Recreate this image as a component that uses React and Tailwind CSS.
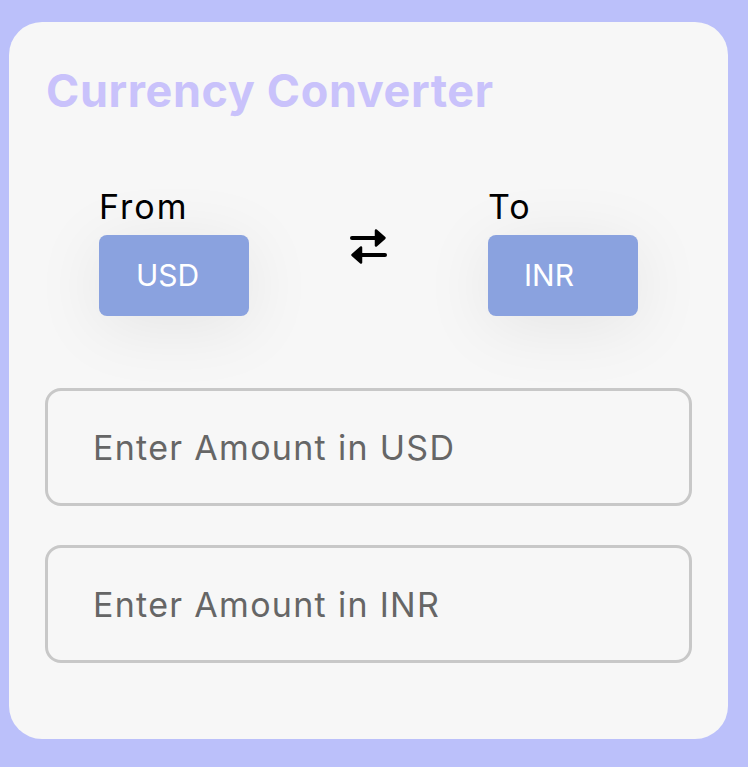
import React from "react";

function SwapIcon() {
  return (
    <svg width="37" height="38" viewBox="0 0 37 38" fill="none" className="block">
      <line x1="2" y1="10" x2="27" y2="10" stroke="#000" strokeWidth="4" strokeLinecap="round" />
      <polygon points="26,2.5 34.5,10 26,17.5" fill="#000" stroke="#000" strokeWidth="2.5" strokeLinejoin="round" />
      <line x1="10" y1="27" x2="35" y2="27" stroke="#000" strokeWidth="4" strokeLinecap="round" />
      <polygon points="11,19.5 2.5,27 11,34.5" fill="#000" stroke="#000" strokeWidth="2.5" strokeLinejoin="round" />
    </svg>
  );
}

export default function App() {
  return (
    <div className="min-h-[767px] w-[748px] bg-[#bbc0fa] pt-[22px] pl-[9px] [font-family:Inter,'Open_Sans',sans-serif]">
      <div className="w-[719px] h-[717px] rounded-[33px] bg-[#f7f7f7] px-9 pt-[46px]">
        <h1 className="text-[45px] leading-[45px] font-bold text-[#c9c2fb] tracking-[0.6px] pl-px">
          Currency Converter
        </h1>
        <div className="mt-[76px] flex justify-center gap-[101px]">
          <div className="flex flex-col">
            <span className="text-[34px] leading-[36px] tracking-[2px] text-black">From</span>
            <div className="mt-[10px] w-[150px] h-[81px] rounded-[8px] bg-[#8aa2df] flex items-center pl-[37px] text-[30px] text-white shadow-[0_10px_70px_rgba(0,0,0,0.08)]">
              USD
            </div>
          </div>
          <div className="pt-[39px]">
            <SwapIcon />
          </div>
          <div className="flex flex-col">
            <span className="text-[34px] leading-[36px] tracking-[2px] text-black">To</span>
            <div className="mt-[10px] w-[150px] h-[81px] rounded-[8px] bg-[#8aa2df] flex items-center pl-[36px] text-[30px] text-white shadow-[0_10px_70px_rgba(0,0,0,0.08)]">
              INR
            </div>
          </div>
        </div>
        <div className="mt-[72px] flex flex-col gap-[39px]">
          <div className="h-[118px] rounded-[16px] border-[3px] border-[#c8c8c8] flex items-center pl-[45px] text-[34px] tracking-[1.3px] text-[#666]">
            Enter Amount in USD
          </div>
          <div className="h-[118px] rounded-[16px] border-[3px] border-[#c8c8c8] flex items-center pl-[45px] text-[34px] tracking-[1.3px] text-[#666]">
            Enter Amount in INR
          </div>
        </div>
      </div>
    </div>
  );
}
